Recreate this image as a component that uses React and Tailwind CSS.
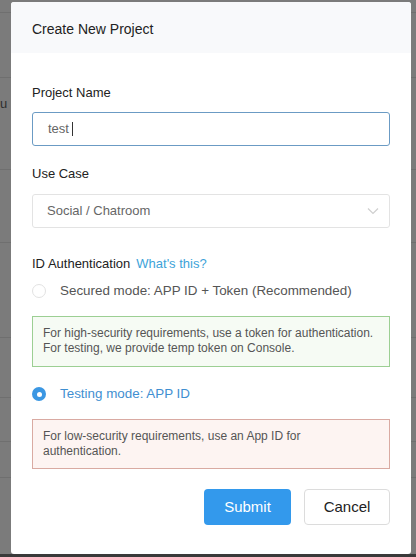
import React, { useState } from 'react';

const Radio = ({ checked }) =>
  checked ? (
    <span className="flex h-[14px] w-[14px] items-center justify-center rounded-full bg-[#3b97e3]">
      <span className="h-[5px] w-[5px] rounded-full bg-white" />
    </span>
  ) : (
    <span className="h-[14px] w-[14px] rounded-full border border-[#e2e2e2] bg-white" />
  );

const App = () => {
  const [mode, setMode] = useState('testing');

  return (
    <div className="relative h-[557px] w-[416px] overflow-hidden bg-[#7b7b7b] font-['Liberation_Sans',Arial,sans-serif]">
      {/* backdrop page, dimmed */}
      <div className="absolute inset-0 flex flex-col">
        <div className="h-[13px] border-b border-[#6f6f6f]" />
        <div className="h-[65px] border-b border-[#6f6f6f]" />
        <div className="h-[92px] border-b border-[#6f6f6f] pt-[18px] text-[13px] leading-[16px] text-[#2e2e2e]">u</div>
        <div className="h-[73px] border-b border-[#6f6f6f]" />
        <div className="h-[95px] border-b border-[#6f6f6f]" />
        <div className="h-[60px] border-b border-[#6f6f6f]" />
        <div className="h-[44px] border-b border-[#6f6f6f]" />
        <div className="h-[36px] border-b border-[#6f6f6f]" />
      </div>
      <div className="absolute bottom-0 left-0 right-0 h-[3px] bg-[#3a3a3a]" />

      {/* modal */}
      <div className="absolute left-[11px] top-[2px] flex h-[552px] w-[400px] flex-col overflow-hidden rounded-[3px] bg-white">
        <div className="flex h-[51px] items-center bg-[#f8f9fb] px-[21px] pt-[3px] text-[14px] text-[#222]">
          Create New Project
        </div>

        <div className="flex flex-col px-[21px]">
          <label className="mt-[32px] text-[13px] leading-[16px] text-[#222]">Project Name</label>
          <div className="mt-[11px] flex h-[34px] items-center rounded-[3px] border border-[#6b9bc4] px-[15px] text-[13px] text-[#666]">
            <span>test</span>
            <span className="ml-[3px] h-[14px] w-px bg-[#333]" />
          </div>

          <label className="mt-[20px] text-[13px] leading-[16px] text-[#222]">Use Case</label>
          <div className="mt-[12px] flex h-[34px] items-center justify-between rounded-[3px] border border-[#e3e3e3] pl-[14px] pr-[10px] text-[13px] text-[#666]">
            <span>Social / Chatroom</span>
            <svg width="12" height="8" viewBox="0 0 12 8" fill="none">
              <path d="M1 1.5 6 6.5 11 1.5" stroke="#cfcfcf" strokeWidth="1.2" />
            </svg>
          </div>

          <div className="mt-[28px] flex items-center text-[13px] leading-[16px]">
            <span className="text-[#222]">ID Authentication</span>
            <span className="ml-[6px] text-[#3da3d9]">What's this?</span>
          </div>

          <button onClick={() => setMode('secured')} className="mt-[11px] flex items-center text-[13.4px] leading-[16px] text-[#555]">
            <Radio checked={mode === 'secured'} />
            <span className="ml-[14px]">Secured mode: APP ID + Token (Recommended)</span>
          </button>

          <div className="mt-[17px] h-[51px] border border-[#9ccf93] bg-[#f6fbf4] px-[10px] pt-[9px] text-[12px] leading-[15px] text-[#555]">
            For high-security requirements, use a token for authentication.
            <br />
            For testing, we provide temp token on Console.
          </div>

          <button onClick={() => setMode('testing')} className="mt-[19px] flex items-center text-[13.4px] leading-[16px] text-[#3f8fd1]">
            <Radio checked={mode === 'testing'} />
            <span className="ml-[14px]">Testing mode: APP ID</span>
          </button>

          <div className="mt-[17px] h-[50px] border border-[#d9aaa2] bg-[#fdf4f2] px-[10px] pt-[9px] text-[12px] leading-[15px] text-[#555]">
            For low-security requirements, use an App ID for
            <br />
            authentication.
          </div>

          <div className="mt-[20px] flex justify-end gap-[13px]">
            <button className="h-[36px] w-[87px] rounded-[4px] bg-[#3399ec] text-[15px] text-white">Submit</button>
            <button className="h-[36px] w-[86px] rounded-[4px] border border-[#dcdcdc] bg-white text-[15px] text-[#222]">Cancel</button>
          </div>
        </div>
      </div>
    </div>
  );
};

export default App;
